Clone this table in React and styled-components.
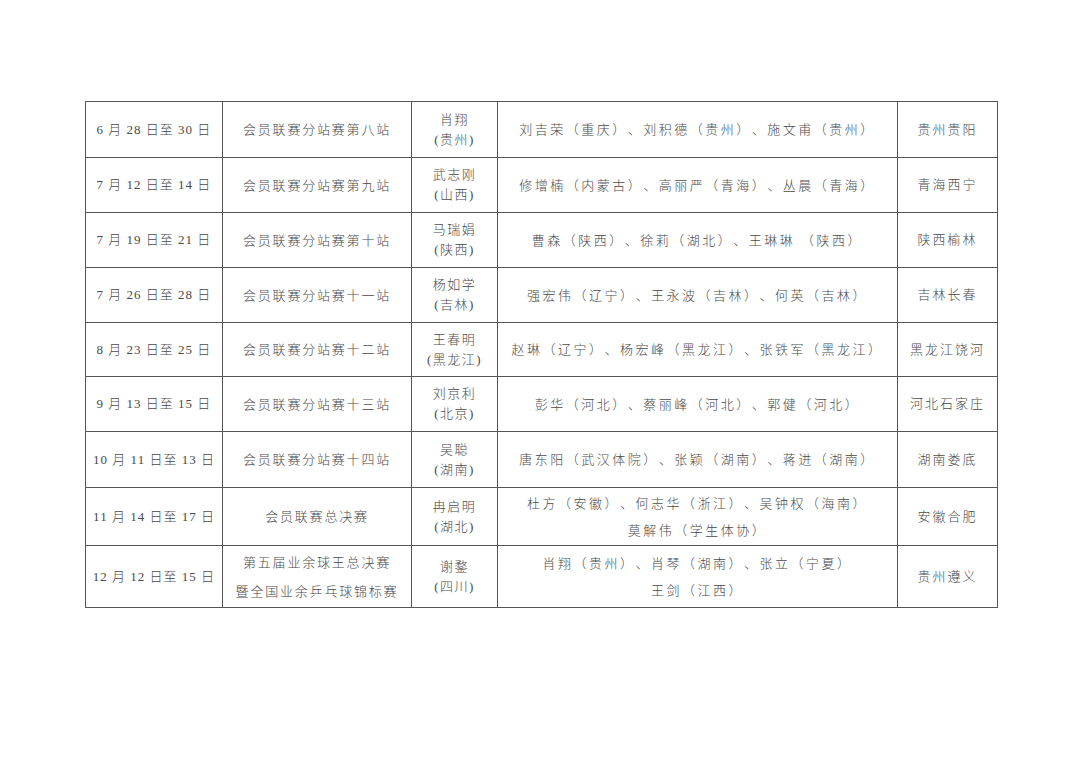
import React from 'react'
import styled, { createGlobalStyle } from 'styled-components'

const GlobalStyle = createGlobalStyle`
  html, body {
    margin: 0;
    padding: 0;
    background: #fff;
  }
  body {
    font-family: "Liberation Serif", "Noto Sans CJK SC", serif;
  }
`

const Page = styled.div`
  width: 1080px;
  height: 763px;
  padding: 101px 0 0 85px;
  box-sizing: border-box;
  background: #fff;
`

const Table = styled.table`
  width: 912px;
  table-layout: fixed;
  border-collapse: collapse;
  color: #4a4a4a;
  font-family: "Liberation Serif", "Noto Sans CJK SC", serif;
  font-weight: 300;
  font-size: 13px;
  text-spacing-trim: space-all;
`

const Row = styled.tr`
  height: ${p => p.$h}px;
`

const Cell = styled.td`
  padding: 0;
  border: 1px solid #555;
  text-align: center;
  vertical-align: middle;
  white-space: nowrap;
  letter-spacing: ${p => p.$ls || 1.8}px;
  line-height: ${p => p.$lh || 20}px;
`

const Line = styled.div`
  display: block;
`

const cols = [137, 189, 86, 400, 100]

const rows = [
  { h: 56, date: '6 月 28 日至 30 日', name: ['会员联赛分站赛第八站'], ref: ['肖翔', '(贵州)'], judges: ['刘吉荣（重庆）、刘积德（贵州）、施文甫（贵州）'], place: '贵州贵阳' },
  { h: 55, date: '7 月 12 日至 14 日', name: ['会员联赛分站赛第九站'], ref: ['武志刚', '(山西)'], judges: ['修增楠（内蒙古）、高丽严（青海）、丛晨（青海）'], place: '青海西宁' },
  { h: 55, date: '7 月 19 日至 21 日', name: ['会员联赛分站赛第十站'], ref: ['马瑞娟', '(陕西)'], judges: ['曹森（陕西）、徐莉（湖北）、王琳琳 （陕西）'], place: '陕西榆林' },
  { h: 55, date: '7 月 26 日至 28 日', name: ['会员联赛分站赛十一站'], ref: ['杨如学', '(吉林)'], judges: ['强宏伟（辽宁）、王永波（吉林）、何英（吉林）'], place: '吉林长春' },
  { h: 54, date: '8 月 23 日至 25 日', name: ['会员联赛分站赛十二站'], ref: ['王春明', '(黑龙江)'], judges: ['赵琳（辽宁）、杨宏峰（黑龙江）、张铁军（黑龙江）'], place: '黑龙江饶河' },
  { h: 55, date: '9 月 13 日至 15 日', name: ['会员联赛分站赛十三站'], ref: ['刘京利', '(北京)'], judges: ['彭华（河北）、蔡丽峰（河北）、郭健（河北）'], place: '河北石家庄' },
  { h: 56, date: '10 月 11 日至 13 日', name: ['会员联赛分站赛十四站'], ref: ['吴聪', '(湖南)'], judges: ['唐东阳（武汉体院）、张颖（湖南）、蒋进（湖南）'], place: '湖南娄底' },
  { h: 58, date: '11 月 14 日至 17 日', name: ['会员联赛总决赛'], ref: ['冉启明', '(湖北)'], judges: ['杜方（安徽）、何志华（浙江）、吴钟权（海南）', '莫解伟（学生体协）'], place: '安徽合肥' },
  { h: 62, date: '12 月 12 日至 15 日', name: ['第五届业余球王总决赛', '暨全国业余乒乓球锦标赛'], ref: ['谢鍪', '(四川)'], judges: ['肖翔（贵州）、肖琴（湖南）、张立（宁夏）', '王剑（江西）'], place: '贵州遵义' },
]

export default function App() {
  return (
    <Page>
      <GlobalStyle />
      <Table>
        <colgroup>
          {cols.map((w, i) => <col key={i} style={{ width: w }} />)}
        </colgroup>
        <tbody>
          {rows.map((r, i) => (
            <Row key={i} $h={r.h}>
              <Cell $ls={1}>{r.date}</Cell>
              <Cell $ls={1.8} $lh={29}>
                {r.name.map((t, j) => <Line key={j}>{t}</Line>)}
              </Cell>
              <Cell $ls={1.5}>
                {r.ref.map((t, j) => <Line key={j}>{t}</Line>)}
              </Cell>
              <Cell $ls={2.5} $lh={27}>
                {r.judges.map((t, j) => <Line key={j}>{t}</Line>)}
              </Cell>
              <Cell $ls={2}>{r.place}</Cell>
            </Row>
          ))}
        </tbody>
      </Table>
    </Page>
  )
}
